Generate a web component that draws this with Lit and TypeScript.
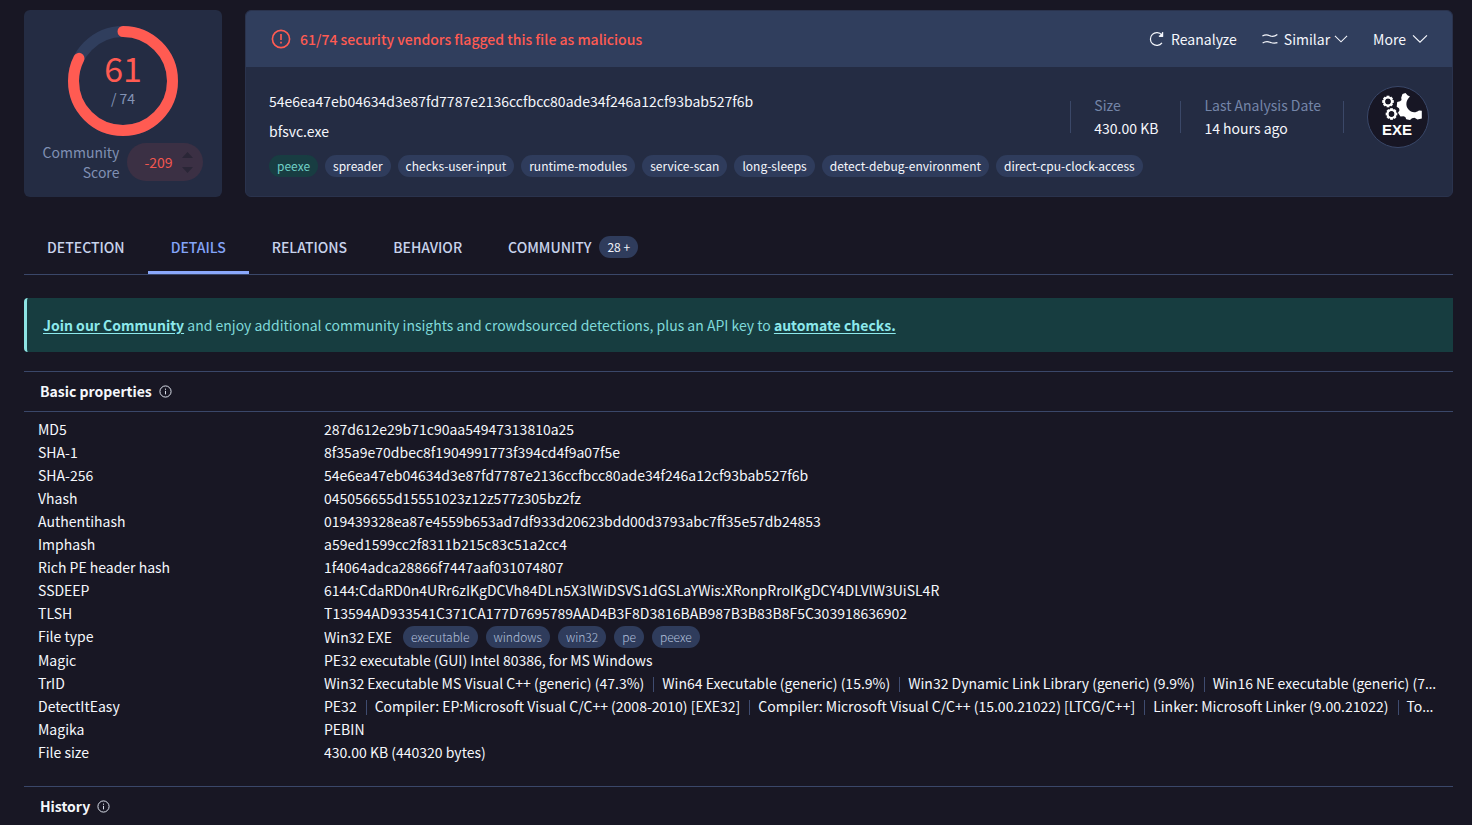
import { LitElement, html, css, svg } from "lit";
import { customElement, property } from "lit/decorators.js";
import { classMap } from "lit/directives/class-map.js";

const icon = {
  alert: svg`<circle cx="10" cy="10" r="7.8"/><path d="M10 5.500v5.500"/><path d="M10 12.600v1.500"/>`,
  info: svg`<circle cx="10" cy="10" r="8.600"/><path d="M10 9v5.400"/><path d="M10 5.600v1.800"/>`,
  reload: svg`<path d="M16.200 14.800a8 8 0 1 1-.2-9.800"/><path d="M16.900 1.500v5h-4.600" /><path d="M16.900 3v3.500h-3z" fill="currentColor"/>`,
  similar: svg`<path d="M.5 6.300q4.500-2.600 9.200-.4t9.500-1.600"/><path d="M.8 15q4.500-3 9.200-1t9.300.6"/>`,
  chevron: svg`<path d="M1.300 5.500l8.700 8.500 8.700-8.500"/>`,
};

@customElement("vt-icon")
class VtIcon extends LitElement {
  @property() name: keyof typeof icon = "info";
  static styles = css`
    :host { display: inline-flex; flex: none; width: 16px; height: 16px; }
    svg { width: 100%; height: 100%; fill: none; stroke: currentColor; stroke-width: 1.5; }
  `;
  render() {
    return html`<svg viewBox="0 0 20 20" aria-hidden="true">${icon[this.name]}</svg>`;
  }
}

const TAGS = ["peexe", "spreader", "checks-user-input", "runtime-modules", "service-scan", "long-sleeps", "detect-debug-environment", "direct-cpu-clock-access"];

const TABS = ["Detection", "Details", "Relations", "Behavior", "Community"];

type Row = { label: string; values: string[]; chips?: string[] };

const ROWS: Row[] = [
  { label: "MD5", values: ["287d612e29b71c90aa54947313810a25"] },
  { label: "SHA-1", values: ["8f35a9e70dbec8f1904991773f394cd4f9a07f5e"] },
  { label: "SHA-256", values: ["54e6ea47eb04634d3e87fd7787e2136ccfbcc80ade34f246a12cf93bab527f6b"] },
  { label: "Vhash", values: ["045056655d15551023z12z577z305bz2fz"] },
  { label: "Authentihash", values: ["019439328ea87e4559b653ad7df933d20623bdd00d3793abc7ff35e57db24853"] },
  { label: "Imphash", values: ["a59ed1599cc2f8311b215c83c51a2cc4"] },
  { label: "Rich PE header hash", values: ["1f4064adca28866f7447aaf031074807"] },
  { label: "SSDEEP", values: ["6144:CdaRD0n4URr6zIKgDCVh84DLn5X3lWiDSVS1dGSLaYWis:XRonpRroIKgDCY4DLVlW3UiSL4R"] },
  { label: "TLSH", values: ["T13594AD933541C371CA177D7695789AAD4B3F8D3816BAB987B3B83B8F5C303918636902"] },
  { label: "File type", values: ["Win32 EXE"], chips: ["executable", "windows", "win32", "pe", "peexe"] },
  { label: "Magic", values: ["PE32 executable (GUI) Intel 80386, for MS Windows"] },
  { label: "TrID", values: ["Win32 Executable MS Visual C++ (generic) (47.3%)", "Win64 Executable (generic) (15.9%)", "Win32 Dynamic Link Library (generic) (9.9%)", "Win16 NE executable (generic) (7.6%)"] },
  { label: "DetectItEasy", values: ["PE32", "Compiler: EP:Microsoft Visual C/C++ (2008-2010) [EXE32]", "Compiler: Microsoft Visual C/C++ (15.00.21022) [LTCG/C++]", "Linker: Microsoft Linker (9.00.21022)", "Tool: Visual Studio (2008)"] },
  { label: "Magika", values: ["PEBIN"] },
  { label: "File size", values: ["430.00 KB (440320 bytes)"] },
];

@customElement("app-root")
class AppRoot extends LitElement {
  @property({ type: Number }) detections = 61;
  @property({ type: Number }) vendors = 74;

  static styles = css`
    :host {
      --text: "Noto Sans CJK KR", "Noto Sans CJK SC", sans-serif;
      display: block;
      min-height: 100vh;
      box-sizing: border-box;
      padding: 10px 19px 0 24px;
      background: #181724;
      color: #f5f7fc;
      font: 400 14px/23px var(--text);
      overflow: hidden;
    }
    * { box-sizing: border-box; }
    button { font: inherit; color: inherit; background: none; border: 0; padding: 0; cursor: pointer; }
    a { color: inherit; text-decoration: none; }

    .summary { display: grid; grid-template-columns: 198px 1fr; gap: 23px; }
    .score-card, .file-card { background: #242c43; border-radius: 6px; }
    .score-card { display: flex; flex-direction: column; align-items: center; padding: 15px 18px 14px; }
    .ring { display: grid; place-items: center; width: 112px; height: 112px; }
    .ring > * { grid-area: 1 / 1; }
    .ring svg { width: 112px; height: 112px; fill: none; stroke-width: 11; }
    .ring .track { stroke: #303e5d; }
    .ring .arc { stroke: #ff5b52; stroke-linecap: round; }
    .count { display: flex; flex-direction: column; align-items: center; padding-bottom: 6px; color: #8393b5; line-height: 20px; }
    .count strong { font-weight: 400; font-size: 34px; line-height: 40px; color: #ff5b52; }
    .community { display: flex; align-items: center; gap: 8px; margin-top: 5px; color: #8090b3; line-height: 20px; text-align: right; }
    .votes { display: flex; align-items: center; justify-content: space-between; width: 76px; height: 38px; padding: 0 10px 0 17px; border-radius: 19px; background: #3b3044; color: #f2564f; }
    .arrows { display: flex; flex-direction: column; gap: 9px; }
    .arrows svg { display: block; width: 11px; height: 6px; fill: #2a2637; }

    .file-card { border: 1px solid #2a334d; overflow: hidden; }
    .file-head { display: flex; align-items: center; height: 56px; padding: 0 24px; background: #303e5d; }
    .alert { display: flex; align-items: center; gap: 8px; flex: 1; color: #ff5b52; font-weight: 500; }
    .alert vt-icon { width: 22px; height: 22px; }
    .actions { display: flex; gap: 25px; }
    .actions button { display: flex; align-items: center; gap: 6px; }
    .actions .similar .caret { width: 14px; height: 14px; margin-left: -2px; }
    .file-body { padding: 19px 23px; }
    .file-top { display: flex; }
    .file-main { flex: 1; min-width: 0; padding-top: 4px; }
    .file-name { margin-top: 7px; }
    .tags { display: flex; flex-wrap: wrap; gap: 7px; margin-top: 7px; }
    .chip { display: inline-block; height: 22px; padding: 0 8px; border-radius: 11px; background: #2f3c5c; font-size: 12px; line-height: 22px; }
    .chip.accent { background: #183d42; color: #6fcfc6; }
    .facts { display: flex; align-items: center; }
    .fact { margin: 0; padding: 0 22px 0 23px; }
    .facts .rule { width: 1px; height: 32px; background: #3b4868; }
    .fact dt { color: #7485a8; }
    .fact dd { margin: 0; }
    .facts .badge { display: block; width: 62px; height: 62px; margin-left: 23px; }

    .tabs { display: flex; margin-top: 23px; height: 55px; border-bottom: 1px solid #3a4769; color: #c8d3ec; text-transform: uppercase; font-weight: 500; }
    .tab { display: flex; align-items: center; gap: 8px; padding: 3px 23px 0; border-bottom: 3px solid transparent; }
    .tab.active { color: #83a4f8; border-color: #8aa8fb; }
    .tab .chip { color: #f0f3fa; font-weight: 400; }

    .banner { margin-top: 23px; padding: 16px 16px 15px; border-left: 3px solid #8de3e3; border-radius: 4px 0 0 4px; background: #173d40; color: #7fd9da; }
    .banner a { color: #8de9ec; font-weight: 700; text-decoration: underline; text-underline-offset: 2px; }

    .section { border-top: 1px solid #3a4769; }
    .section.first { margin-top: 19px; }
    .section h2 { display: flex; align-items: center; gap: 7px; margin: 0; height: 40px; padding: 0 16px; border-bottom: 1px solid #3a4769; font-size: 14px; font-weight: 700; }
    .section h2 vt-icon { width: 13px; height: 13px; color: #dfe4ef; }
    .props { margin: 0; padding: 6px 15px 22px 14px; }
    .row { display: grid; grid-template-columns: 286px minmax(0, 1fr); }
    .row dd { height: 23px; margin: 0; font-family: "Noto Sans", sans-serif; white-space: nowrap; overflow: hidden; text-overflow: ellipsis; }
    .row dd > * { font-family: var(--text); }
    .row .line { display: flex; gap: 8px; align-items: center; height: 24px; }
    .row .line .chip:first-of-type { margin-left: 3px; }
    .row .chip { color: #b3c0dc; font-weight: 300; }
    .bar { display: inline-block; width: 1px; height: 15px; margin: 0 8px 0 9px; background: #3f4c70; vertical-align: -3px; }
  `;

  private arc() {
    const length = 2 * Math.PI * 49.5;
    const part = (length * this.detections) / this.vendors;
    return svg`<circle class="arc" cx="56" cy="56" r="49.5" transform="rotate(-90 56 56)" stroke-dasharray="${part} ${length}"/>`;
  }

  private exeBadge() {
    const cog = (x: number, y: number) => svg`<g transform="translate(${x} ${y})" fill="#fff">
      ${Array.from({ length: 8 }, (_, i) => svg`<rect x="-1.4" y="-5.8" width="2.8" height="2.5" transform="rotate(${i * 45})"/>`)}
      <circle r="3.9" fill="none" stroke="#fff" stroke-width="2"/>
    </g>`;
    return html`<svg class="badge" viewBox="0 0 62 62" role="img" aria-label="EXE file">
      <circle cx="31" cy="31" r="30.500" fill="#171624" stroke="#3a4869"/>
      ${cog(21, 15.5)}${cog(24.5, 28)}
      <path fill="#fff" d="M35.500 8L38.500 7l2 2.200 2.500 1.300c-4 3.500-4.800 9-1.700 12.800 2.800 3.500 7.200 4 10.700 1.200l2.800.3v7.700l-4.300 1-3-1.800-2.500.5-2 1.800-3.700-.8-1-2.200-1.800-.8-3 .3-2.500-3.800 1.500-2.500-.5-2-2.300-1.500.5-4.700 2.800-.7 1.500-1.300-.3-2.300z"/>
      <text x="30" y="49" text-anchor="middle" font-family="Liberation Sans" font-weight="700" font-size="15" fill="#fff">EXE</text>
    </svg>`;
  }

  private value(row: Row) {
    if (row.chips) {
      return html`<dd class="line"><span>${row.values[0]}</span>${row.chips.map((c) => html`<a class="chip" href="#">${c}</a>`)}</dd>`;
    }
    return html`<dd>${row.values.map((v, i) => html`${i ? html`<span class="bar"></span>` : ""}<span>${v}</span>`)}</dd>`;
  }

  render() {
    return html`
      <header class="summary">
        <section class="score-card">
          <div class="ring">
            <svg viewBox="0 0 112 112" aria-hidden="true"><circle class="track" cx="56" cy="56" r="49.5"/>${this.arc()}</svg>
            <div class="count"><strong>${this.detections}</strong><span>/ ${this.vendors}</span></div>
          </div>
          <div class="community">
            <span>Community<br>Score</span>
            <div class="votes">
              <span>-209</span>
              <span class="arrows">
                <svg viewBox="0 0 11 6"><path d="M0 6l5.500-6L11 6z"/></svg>
                <svg viewBox="0 0 11 6"><path d="M0 0l5.500 6L11 0z"/></svg>
              </span>
            </div>
          </div>
        </section>
        <section class="file-card">
          <div class="file-head">
            <div class="alert"><vt-icon name="alert"></vt-icon>${this.detections}/${this.vendors} security vendors flagged this file as malicious</div>
            <div class="actions">
              <button><vt-icon name="reload"></vt-icon>Reanalyze</button>
              <button class="similar"><vt-icon name="similar"></vt-icon>Similar<vt-icon class="caret" name="chevron"></vt-icon></button>
              <button>More<vt-icon name="chevron"></vt-icon></button>
            </div>
          </div>
          <div class="file-body">
            <div class="file-top">
              <div class="file-main">
                <div>54e6ea47eb04634d3e87fd7787e2136ccfbcc80ade34f246a12cf93bab527f6b</div>
                <div class="file-name">bfsvc.exe</div>
              </div>
              <div class="facts">
                <span class="rule"></span>
                <dl class="fact"><dt>Size</dt><dd>430.00 KB</dd></dl>
                <span class="rule"></span>
                <dl class="fact"><dt>Last Analysis Date</dt><dd>14 hours ago</dd></dl>
                <span class="rule"></span>
                ${this.exeBadge()}
              </div>
            </div>
            <div class="tags">${TAGS.map((t, i) => html`<a href="#" class=${classMap({ chip: true, accent: i === 0 })}>${t}</a>`)}</div>
          </div>
        </section>
      </header>
      <nav class="tabs">
        ${TABS.map((t) => html`<a href="#" class=${classMap({ tab: true, active: t === "Details" })}>${t}${t === "Community" ? html`<span class="chip">28 +</span>` : ""}</a>`)}
      </nav>
      <div class="banner"><a href="#">Join our Community</a> and enjoy additional community insights and crowdsourced detections, plus an API key to <a href="#">automate checks.</a></div>
      <section class="section first">
        <h2>Basic properties<vt-icon name="info"></vt-icon></h2>
        <dl class="props">${ROWS.map((r) => html`<div class="row"><dt>${r.label}</dt>${this.value(r)}</div>`)}</dl>
      </section>
      <section class="section"><h2>History<vt-icon name="info"></vt-icon></h2></section>
    `;
  }
}
